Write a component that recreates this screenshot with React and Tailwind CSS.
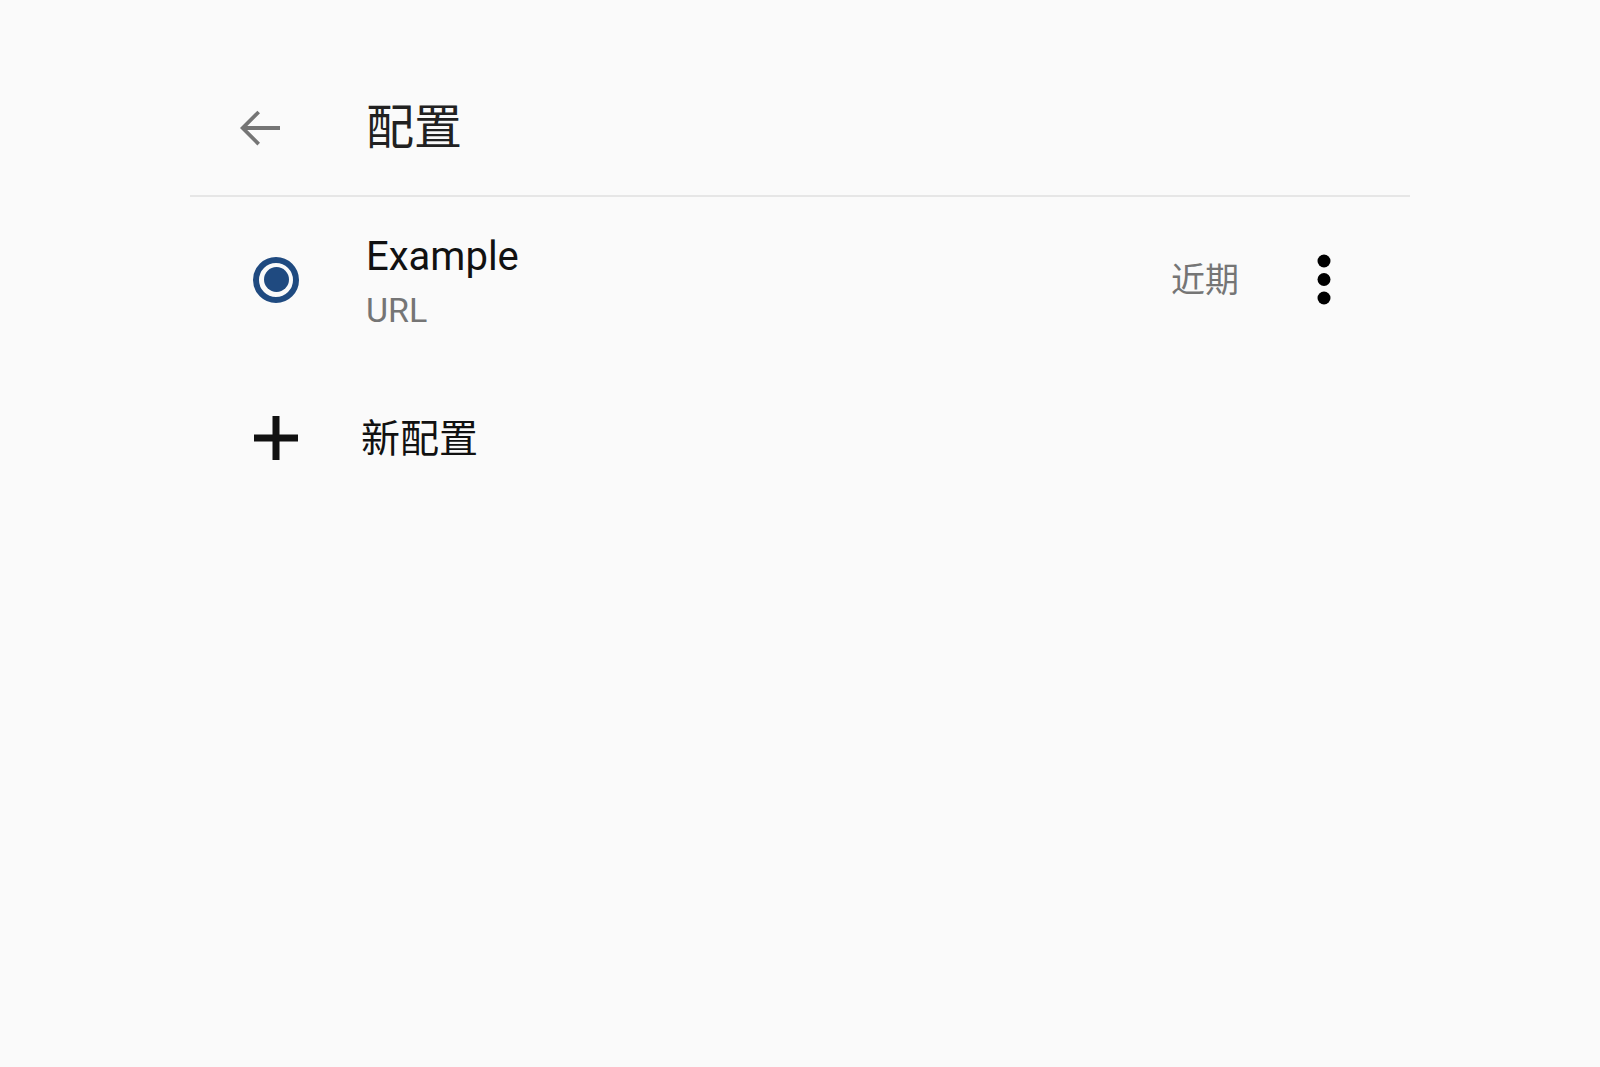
import React from 'react';

const font = { fontFamily: 'Roboto, "Noto Sans CJK SC", sans-serif' };

const BackArrow = () => (
    <svg width="60" height="60" viewBox="0 0 24 24" fill="#757575">
        <path d="M20 11.2H6.9l5.1-5.1L10.95 5.05 4 12l6.95 6.95L12 17.9l-5.1-5.1H20z" />
    </svg>
);

const MoreVert = () => (
    <svg width="14" height="52" viewBox="0 0 14 52" fill="#000">
        <circle cx="7" cy="7" r="6.5" />
        <circle cx="7" cy="25.5" r="6.5" />
        <circle cx="7" cy="44" r="6.5" />
    </svg>
);

const Plus = () => (
    <svg width="44" height="44" viewBox="0 0 44 44" fill="#111">
        <rect x="18.5" y="0" width="7" height="44" />
        <rect x="0" y="18.5" width="44" height="7" />
    </svg>
);

const App = () => {
    const profiles = [{ id: 1, name: 'Example', type: 'URL', updated: '近期', selected: true }];

    return (
        <div className="min-h-screen bg-[#fafafa]" style={font}>
            <div className="mx-auto w-[1220px]">
                <header className="pt-[82px] pb-[21px] border-b-2 border-[#e6e6e6]">
                    <div className="flex h-[92px] items-center">
                        <button className="ml-[40px] flex h-[60px] w-[60px] items-center justify-center">
                            <BackArrow />
                        </button>
                        <h1 className="ml-[76px] text-[48px] leading-none text-[#212121]">配置</h1>
                    </div>
                </header>

                <ul className="pt-[37px]">
                    {profiles.map(p => (
                        <li key={p.id} className="flex items-center">
                            <div className="mb-[5px] ml-[63px] flex h-[46px] w-[46px] items-center justify-center rounded-full border-[6px] border-[#1f4a80]">
                                {p.selected && <div className="h-[25px] w-[25px] rounded-full bg-[#1f4a80]" />}
                            </div>
                            <div className="ml-[67px] flex flex-col">
                                <span className="text-[40px] leading-[46px] text-[#111]">{p.name}</span>
                                <span className="mt-[10px] text-[34px] leading-[40px] text-[#757575]">{p.type}</span>
                            </div>
                            <span className="mb-[4px] ml-auto text-[34px] leading-[40px] text-[#757575]">{p.updated}</span>
                            <button className="mb-[4px] ml-[78px] mr-[79px] flex items-center">
                                <MoreVert />
                            </button>
                        </li>
                    ))}
                </ul>

                <button className="mt-[84px] flex h-[50px] items-center">
                    <span className="mb-[2px] ml-[64px] flex">
                        <Plus />
                    </span>
                    <span className="ml-[63px] text-[39px] leading-[50px] text-[#111]">新配置</span>
                </button>
            </div>
        </div>
    );
};

export default App;
